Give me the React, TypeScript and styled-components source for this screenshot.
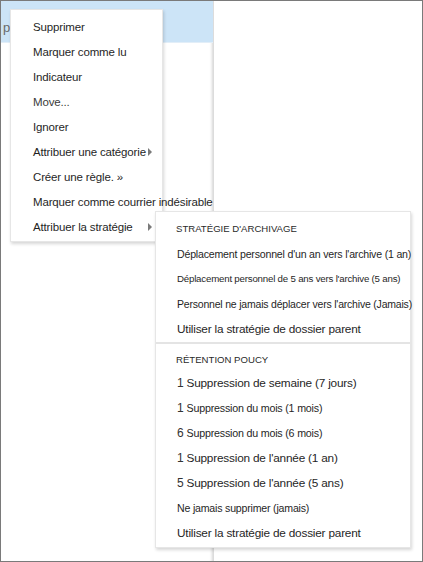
import styled, { createGlobalStyle } from "styled-components";

const GlobalStyle = createGlobalStyle`
  html, body {
    margin: 0;
    padding: 0;
    background: #ffffff;
  }
  body {
    font-family: "Liberation Sans", Arial, sans-serif;
    color: #1f1f1f;
  }
`

const Frame = styled.div`
  position: relative;
  width: 423px;
  height: 562px;
  box-sizing: border-box;
  border: 1px solid #7a7a7a;
  display: flex;
  overflow: hidden;
  background: #ffffff;
`

const ListPane = styled.div`
  width: 212px;
  display: flex;
  flex-direction: column;
  box-shadow: inset -3px 0 3px -2px #d4d4d4;
`

const SelectedRow = styled.div`
  height: 42px;
  box-sizing: border-box;
  background: #cce4f7;
  display: flex;
  align-items: center;
  padding: 12px 0 0 2px;
  font-size: 13px;
  color: #6a6a6a;
  border-bottom: 1px solid #e2eef8;
`

const ReadingPane = styled.div`
  flex: 1;
  border-left: 1px solid #dcdcdc;
  background: #ffffff;
`

const Menu = styled.ul<{ $left: number, $top: number, $width: number }>`
  position: absolute;
  left: ${p => p.$left}px;
  top: ${p => p.$top}px;
  width: ${p => p.$width}px;
  margin: 0;
  padding: 4px 0 2px;
  list-style: none;
  background: #ffffff;
  border: 1px solid #e6e6e6;
  box-shadow: 1px 2px 3px rgba(0, 0, 0, 0.16);
  box-sizing: border-box;
`

const Item = styled.li<{ $muted?: boolean }>`
  height: 25px;
  display: flex;
  align-items: center;
  padding-left: 22px;
  font-size: 11.5px;
  color: ${p => (p.$muted ? "#3a3a3a" : "#1f1f1f")};
  white-space: nowrap;
  letter-spacing: -0.15px;
`

const Arrow = styled.span<{ $gap: number }>`
  margin-left: ${p => p.$gap}px;
  width: 0;
  height: 0;
  border-top: 4px solid transparent;
  border-bottom: 4px solid transparent;
  border-left: 4px solid #7a7a7a;
`

const SubItem = styled.li<{ $size?: number }>`
  height: 25px;
  display: flex;
  align-items: center;
  padding-left: 21px;
  font-size: ${p => p.$size ?? 11.8}px;
  color: #1f1f1f;
  white-space: nowrap;
  letter-spacing: -0.2px;
`

const Num = styled.span`
  font-size: 12px;
  margin-right: 3px;
  color: #333333;
`

const Heading = styled.li<{ $lead?: number }>`
  height: 25px;
  display: flex;
  align-items: center;
  padding: ${p => p.$lead ?? 0}px 0 0 20px;
  box-sizing: border-box;
  font-size: 9.6px;
  color: #2a2a2a;
`

const Divider = styled.li`
  height: 2px;
  margin: 1px 0 1px;
  background: #e4e4e4;
`

export default function App() {
  return (
    <>
      <GlobalStyle />
      <Frame>
        <ListPane>
          <SelectedRow>pe</SelectedRow>
        </ListPane>
        <ReadingPane />

        <Menu $left={9} $top={8} $width={153}>
          <Item>Supprimer</Item>
          <Item>Marquer comme lu</Item>
          <Item>Indicateur</Item>
          <Item $muted>Move...</Item>
          <Item>Ignorer</Item>
          <Item>Attribuer une catégorie<Arrow $gap={2} /></Item>
          <Item>Créer une règle. »</Item>
          <Item>Marquer comme courrier indésirable</Item>
          <Item>Attribuer la stratégie<Arrow $gap={15} /></Item>
        </Menu>

        <Menu $left={154} $top={210} $width={256}>
          <Heading>STRATÉGIE D'ARCHIVAGE</Heading>
          <SubItem $size={10.6}>Déplacement personnel d'un an vers l'archive (1 an)</SubItem>
          <SubItem $size={9.7}>Déplacement personnel de 5 ans vers l'archive (5 ans)</SubItem>
          <SubItem $size={10.5}>Personnel ne jamais déplacer vers l'archive (Jamais)</SubItem>
          <SubItem>Utiliser la stratégie de dossier parent</SubItem>
          <Divider />
          <Heading $lead={4}>RÉTENTION POUCY</Heading>
          <SubItem><Num>1</Num>Suppression de semaine (7 jours)</SubItem>
          <SubItem $size={10.7}><Num>1</Num>Suppression du mois (1 mois)</SubItem>
          <SubItem $size={10.7}><Num>6</Num>Suppression du mois (6 mois)</SubItem>
          <SubItem><Num>1</Num>Suppression de l'année (1 an)</SubItem>
          <SubItem><Num>5</Num>Suppression de l'année (5 ans)</SubItem>
          <SubItem $size={10.6}>Ne jamais supprimer (jamais)</SubItem>
          <SubItem>Utiliser la stratégie de dossier parent</SubItem>
        </Menu>
      </Frame>
    </>
  )
}
